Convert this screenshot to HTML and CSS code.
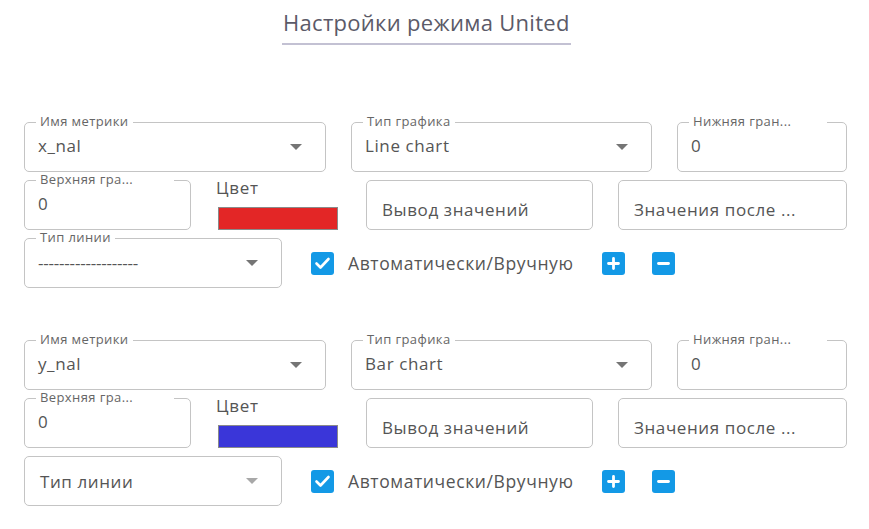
FILE: index.html
```html
<!DOCTYPE html>
<html lang="ru">
<head>
<meta charset="utf-8">
<title>Настройки режима United</title>
<link rel="stylesheet" href="styles.css">
</head>
<body>
<div class="page">
  <header class="head"><h1 class="title">Настройки режима United</h1></header>

  <section class="block">
    <div class="row">
      <div class="field select w-metric"><span class="notch">Имя метрики</span><span class="value">x_nal</span><span class="arrow"></span></div>
      <div class="field select w-chart"><span class="notch">Тип графика</span><span class="value">Line chart</span><span class="arrow"></span></div>
      <div class="field w-low"><span class="notch notch-wide">Нижняя гран...</span><span class="value">0</span></div>
    </div>
    <div class="row">
      <div class="field w-up"><span class="notch notch-wide">Верхняя гра...</span><span class="value">0</span></div>
      <div class="color-col"><span class="color-label">Цвет</span><span class="swatch red"></span></div>
      <div class="field placeholder w-out"><span class="value">Вывод значений</span></div>
      <div class="field placeholder w-after"><span class="value">Значения после ...</span></div>
    </div>
    <div class="row">
      <div class="field select w-line"><span class="notch">Тип линии</span><span class="value dashes">-------------------</span><span class="arrow"></span></div>
      <span class="check"><svg width="23" height="23" viewBox="0 0 23 23"><path d="M5.5 11.5 L9.5 15.5 L17.5 7" fill="none" stroke="#fff" stroke-width="2.6" stroke-linecap="round" stroke-linejoin="round"/></svg></span>
      <span class="auto-label">Автоматически/Вручную</span>
      <span class="btn btn-plus"><svg width="23" height="23" viewBox="0 0 23 23"><path d="M6.5 11.5 H16.5 M11.5 6.5 V16.5" stroke="#fff" stroke-width="2.8" stroke-linecap="round"/></svg></span>
      <span class="btn btn-minus"><svg width="23" height="23" viewBox="0 0 23 23"><path d="M6.5 11.5 H16.5" stroke="#fff" stroke-width="2.8" stroke-linecap="round"/></svg></span>
    </div>
  </section>

  <section class="block">
    <div class="row">
      <div class="field select w-metric"><span class="notch">Имя метрики</span><span class="value">y_nal</span><span class="arrow"></span></div>
      <div class="field select w-chart"><span class="notch">Тип графика</span><span class="value">Bar chart</span><span class="arrow"></span></div>
      <div class="field w-low"><span class="notch notch-wide">Нижняя гран...</span><span class="value">0</span></div>
    </div>
    <div class="row">
      <div class="field w-up"><span class="notch notch-wide">Верхняя гра...</span><span class="value">0</span></div>
      <div class="color-col"><span class="color-label">Цвет</span><span class="swatch blue"></span></div>
      <div class="field placeholder w-out"><span class="value">Вывод значений</span></div>
      <div class="field placeholder w-after"><span class="value">Значения после ...</span></div>
    </div>
    <div class="row">
      <div class="field select w-line"><span class="value ph">Тип линии</span><span class="arrow arrow-light"></span></div>
      <span class="check"><svg width="23" height="23" viewBox="0 0 23 23"><path d="M5.5 11.5 L9.5 15.5 L17.5 7" fill="none" stroke="#fff" stroke-width="2.6" stroke-linecap="round" stroke-linejoin="round"/></svg></span>
      <span class="auto-label">Автоматически/Вручную</span>
      <span class="btn btn-plus"><svg width="23" height="23" viewBox="0 0 23 23"><path d="M6.5 11.5 H16.5 M11.5 6.5 V16.5" stroke="#fff" stroke-width="2.8" stroke-linecap="round"/></svg></span>
      <span class="btn btn-minus"><svg width="23" height="23" viewBox="0 0 23 23"><path d="M6.5 11.5 H16.5" stroke="#fff" stroke-width="2.8" stroke-linecap="round"/></svg></span>
    </div>
  </section>
</div>
</body>
</html>
```
FILE: styles.css
```css
* { box-sizing: border-box; }

body {
  margin: 0;
  background: #fff;
  font-family: "Open Sans", "Liberation Sans", sans-serif;
  color: #555;
}

.page {
  width: 869px;
  padding-left: 24px;
}

.head {
  padding-left: 258px;
}

.title {
  display: inline-block;
  margin: 0;
  padding: 8px 1px 7px;
  font-size: 22px;
  line-height: 28px;
  font-weight: 400;
  letter-spacing: 0.3px;
  color: #5b5a68;
  border-bottom: 2px solid #c3c1d3;
}

.block {
  margin-top: 77px;
  display: flex;
  flex-direction: column;
  gap: 8px;
}

.block + .block {
  margin-top: 52px;
}

.row {
  display: flex;
  align-items: center;
}

.field {
  position: relative;
  height: 50px;
  border: 1px solid #c4c4c4;
  border-radius: 5px;
  display: flex;
  align-items: center;
  padding-left: 13px;
  font-size: 17px;
  letter-spacing: 0.6px;
  color: #555;
  flex: none;
}

.value {
  flex: 1;
  white-space: nowrap;
  margin-top: -4px;
}

.dashes {
  letter-spacing: -0.2px;
  margin-top: -2px;
}

.ph {
  margin-top: 0;
  padding-left: 2px;
}

.notch {
  position: absolute;
  top: -8px;
  left: 11px;
  padding: 0 4px;
  background: #fff;
  font-size: 13px;
  line-height: 12px;
  letter-spacing: 0.4px;
  color: #666;
  white-space: nowrap;
}

.notch-wide {
  width: 138px;
}

.arrow {
  width: 0;
  height: 0;
  margin-right: 23px;
  border-left: 6.5px solid transparent;
  border-right: 6.5px solid transparent;
  border-top: 6.5px solid #757575;
}

.arrow-light {
  border-top-color: #a8a8a8;
}

.placeholder {
  padding-left: 15px;
  padding-top: 12px;
}

.w-metric { width: 302px; }
.w-chart { width: 301px; margin-left: 25px; }
.w-low { width: 170px; margin-left: 25px; }
.w-up { width: 167px; }
.w-out { width: 227px; margin-left: 27px; }
.w-after { width: 229px; margin-left: 25px; }
.w-line { width: 258px; }

.color-col {
  width: 123px;
  margin-left: 25px;
  align-self: stretch;
  display: flex;
  flex-direction: column;
  flex: none;
}

.color-label {
  margin-top: -2px;
  font-size: 17px;
  line-height: 20px;
  letter-spacing: 0.7px;
  color: #555;
}

.swatch {
  margin: 9px 0 0 2px;
  width: 120px;
  height: 23px;
  border: 1px solid #8a8a8a;
}

.red { background: #e32626; }
.blue { background: #3a36d9; }

.check {
  margin-left: 29px;
  width: 23px;
  height: 23px;
  border-radius: 3px;
  background: #1399e6;
  display: flex;
  flex: none;
}

.auto-label {
  margin-left: 14px;
  font-size: 17.5px;
  letter-spacing: 0.6px;
  color: #555;
  white-space: nowrap;
}

.btn {
  width: 23px;
  height: 23px;
  border-radius: 3px;
  background: #1399e6;
  display: flex;
  flex: none;
}

.btn-plus { margin-left: 28px; }
.btn-minus { margin-left: 27px; }
```
